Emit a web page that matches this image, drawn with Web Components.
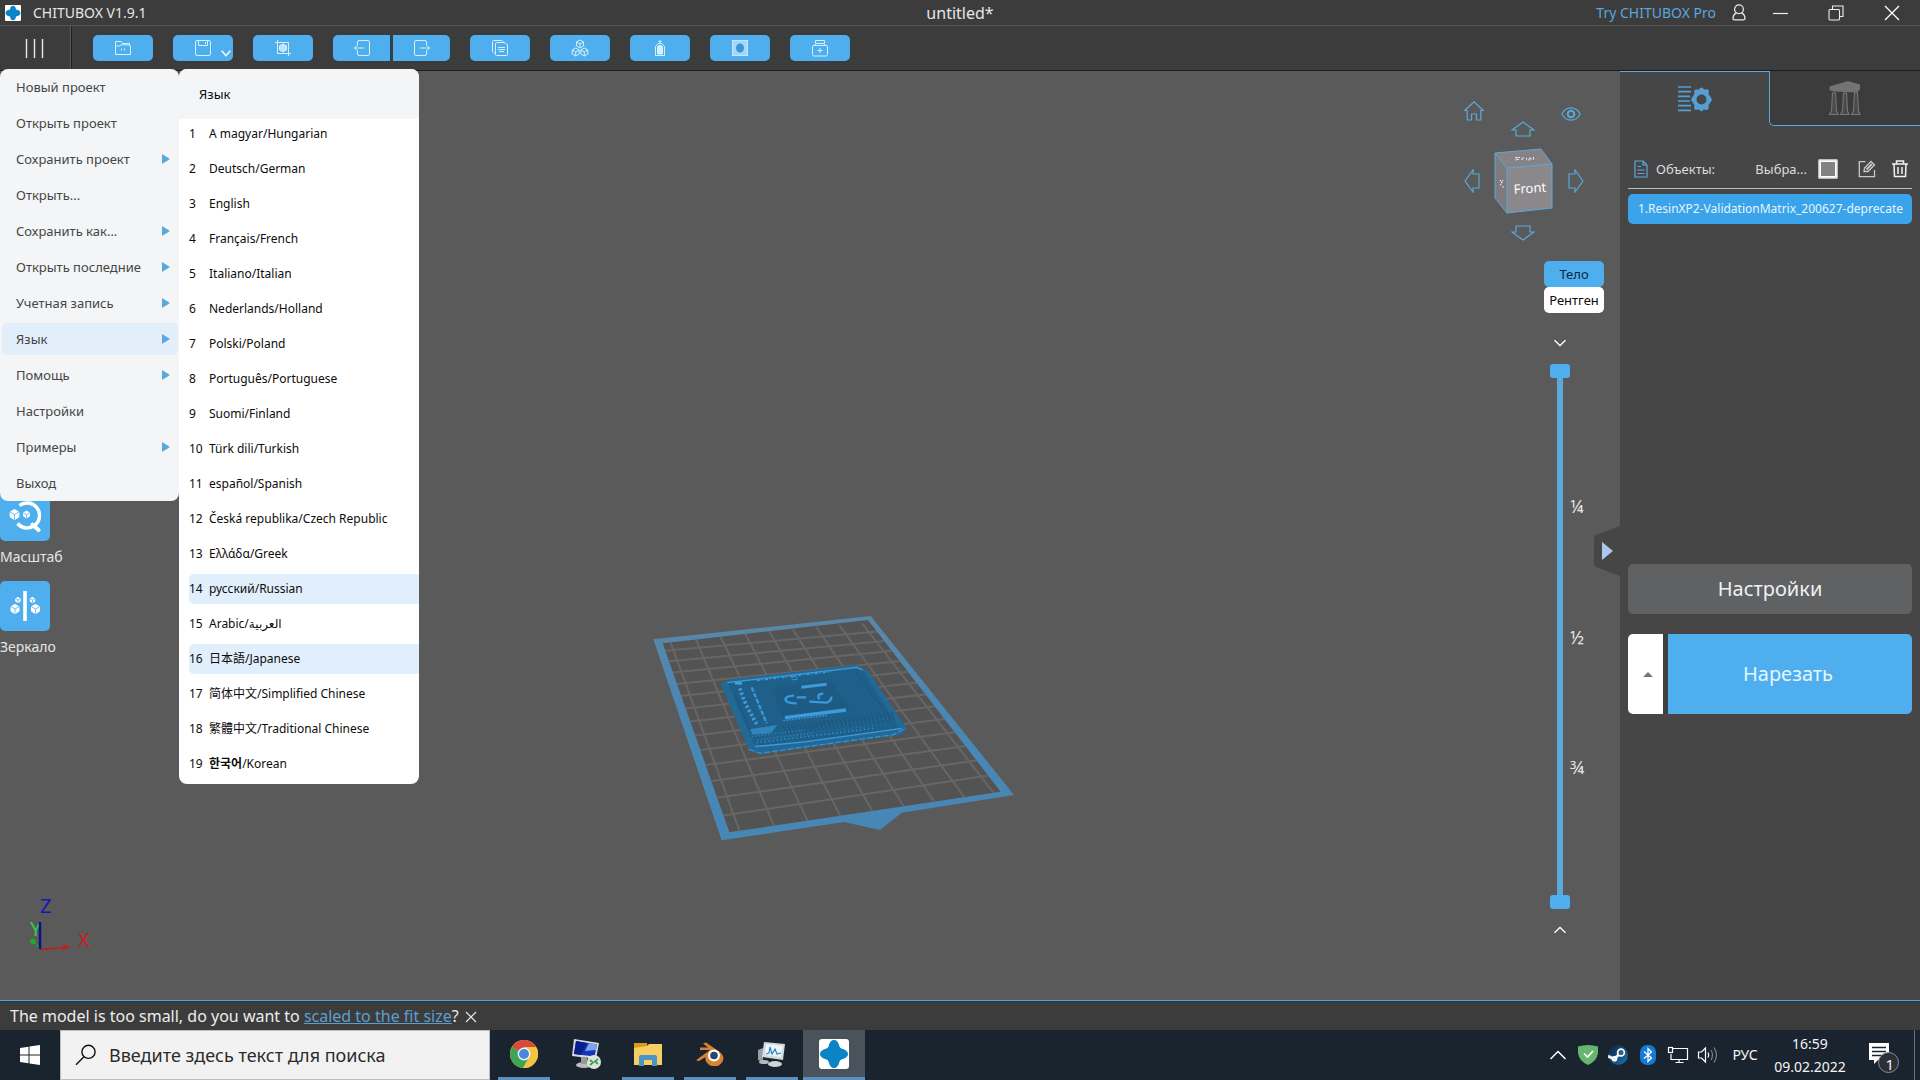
<!DOCTYPE html>
<html lang="ru">
<head>
<meta charset="utf-8">
<title>CHITUBOX</title>
<style>
:root{
  --ui:"Noto Sans","Open Sans","Noto Sans CJK SC","DejaVu Sans",sans-serif;
  --blue:#4faeed; --line:#5ba9dc; --bar:#3c3c3c; --panel:#464646; --canvas:#5a5a5a; --light:#f3f5f7;
}
html,body{margin:0;height:100%}
body{font-family:var(--ui);font-size:13px;line-height:20px;color:#e6e6e6;background:var(--canvas);overflow:hidden}
chitu-app{height:100vh}
</style>
</head>
<body>
<chitu-app></chitu-app>
<script>
const RESET = `*{box-sizing:border-box}
button{font:inherit;color:inherit;background:none;border:0;padding:0;margin:0;cursor:pointer}
svg{display:block}`;

function component(tag, css, html, setup){
  const tpl = document.createElement('template');
  tpl.innerHTML = `<style>${RESET}${css}</style>${html}`;
  customElements.define(tag, class extends HTMLElement{
    connectedCallback(){
      if(this.shadowRoot) return;
      const root = this.attachShadow({mode:'open'});
      root.append(tpl.content.cloneNode(true));
      if(setup) setup(this, root);
    }
  });
}

/* ---------- icons: name -> [width, height, markup] ---------- */
const cube = (x,y,r,f='none') => {
  const h=r*.5, w=r*.87;
  return `<path d="M${x} ${y-r}L${x+w} ${y-h}V${y+h}L${x} ${y+r}L${x-w} ${y+h}V${y-h}Z" fill="${f}"/><path d="M${x-w} ${y-h}L${x} ${y}L${x+w} ${y-h}M${x} ${y}V${y+r}"/>`;
};
const solid = (x,y,r) => {
  const h=r*.5, w=r*.87;
  return `<path d="M${x} ${y-r}L${x+w} ${y-h}V${y+h}L${x} ${y+r}L${x-w} ${y+h}V${y-h}Z" fill="#fff" stroke="#fff" stroke-linejoin="round"/><path d="M${x-w} ${y-h}L${x} ${y}L${x+w} ${y-h}M${x} ${y}V${y+r}" fill="none" stroke="#4faeed" stroke-width=".8"/>`;
};
const T = 'fill="none" stroke="#d4f1fd" stroke-width="1"';
const ICONS = {
  logo:[16,16,`<rect width="16" height="16" rx="1" fill="#fff"/><path d="M8 .8C9.6.8 10.7 2 11 4.6 14 5 15.4 6.4 15.4 8S14 11 11 11.4C10.7 14 9.600 15.200 8 15.200S5.300 14 5 11.400C2 11 .6 9.600.6 8S2 5 5 4.600C5.300 2 6.400.8 8 .8Z" fill="#0a84c6"/>`],
  bars:[20,20,`<path d="M2.500 1V20M10.500 1V20M18.500 1V20" stroke="#e8e8e8" stroke-width="1.400"/>`],
  open:[18,16,`<g ${T}><path d="M1.500 14.500V1.500H7L8.500 3.500H15.500V6"/><path d="M1.500 6H5.500L7 4.800H14L16.500 6V14.500H1.500Z"/><path d="M7.500 8.500V10.500M10.500 8.500V10.500"/></g>`],
  save:[18,18,`<g ${T}><rect x="1.500" y="1.500" width="15" height="15" rx="1.500"/><path d="M4.500 1.500V6.500H13.500V1.500M11.500 3V5"/></g>`],
  chevS:[10,7,`<path d="M.7.800L5 5.800L9.300.800" fill="none" stroke="#fff" stroke-width="1.400"/>`],
  crop:[18,18,`<g ${T}><path d="M3.500 1V14.500H17M1 3.500H14.500V17"/><path d="M9 5L12.500 6.800V11L9 13L5.500 11V6.800Z" fill="#bfe3f9"/></g>`],
  undo:[18,18,`<g ${T}><path d="M4.500 6V3Q4.500 1.500 6 1.500H15Q16.500 1.500 16.500 3V15Q16.500 16.500 15 16.500H6Q4.500 16.500 4.500 15V12"/><path d="M11.500 9H1.500M4.500 6L1.500 9L4.500 12"/></g>`],
  redo:[18,18,`<g ${T}><path d="M13.500 6V3Q13.500 1.500 12 1.500H3Q1.500 1.500 1.500 3V15Q1.500 16.500 3 16.500H12Q13.500 16.500 13.500 15V12"/><path d="M6.500 9H16.500M13.500 6L16.500 9L13.500 12"/></g>`],
  copy:[18,18,`<g ${T}><path d="M4 14.500L2.500 13.500Q1.500 13 1.500 12V2.500Q1.500 1.500 2.500 1.500H10.500Q11.500 1.500 12 2.500L12.500 3.500"/><path d="M5.500 3.500H14L16.500 6V15.500Q16.500 16.500 15.500 16.500H5.500Q4.500 16.500 4.500 15.500V4.500Q4.500 3.500 5.500 3.500Z"/><path d="M7 8.500H14M7 10.500H14M8 12.500H13"/></g>`],
  cubes:[18,18,`<g ${T}>${cube(9,5,4)}${cube(4.700,13,4)}${cube(13.300,13,4)}</g>`],
  bottle:[12,18,`<g ${T}><path d="M6 1V4M4.500 2.500H7.500"/><path d="M4 4.500H8L10.500 7.500V16.500H1.500V7.500Z"/><path d="M3.500 8V15H8.500V8L7.500 6.500H4.500Z" fill="#d4f1fd"/></g>`],
  hollow:[18,18,`<rect x="1.500" y="1.500" width="15" height="15" fill="#a5d6f6" stroke="#c5e7fb"/><ellipse cx="9" cy="9" rx="4" ry="4.500" fill="#3f95d4"/>`],
  kit:[18,18,`<g ${T}><rect x="1.500" y="6.500" width="15" height="10.500" rx="1.500"/><path d="M3.500 6.500L5 4.500H13L14.500 6.500M4.500 4.500V1.500H13.500V4.500M9 9V14M6.500 11.500H11.500"/></g>`],
  user:[14,17,`<g fill="none" stroke="#e8e8e8" stroke-width="1.300"><circle cx="7" cy="5.200" r="4.400"/><path d="M4.500 8.800Q1 10.500 1 14.500Q1 15.900 2.500 15.900H11.500Q13 15.900 13 14.500Q13 10.500 9.500 8.800"/></g>`],
  min:[16,16,`<path d="M1 8.500H16" stroke="#eee" stroke-width="1.200"/>`],
  restore:[16,16,`<g fill="none" stroke="#eee" stroke-width="1.100"><rect x="1" y="4.500" width="10.500" height="10.500" rx="1"/><path d="M4.500 4.500V1H15V11.500H11.500"/></g>`],
  close:[16,16,`<path d="M1 1L15 15M15 1L1 15" stroke="#fff" stroke-width="1.300"/>`],
  closeS:[12,12,`<path d="M1 1L11 11M11 1L1 11" stroke="#e6e6e6" stroke-width="1.200"/>`],
  scale:[32,32,`<path d="M10.500 5.500A12.500 12.500 0 1 1 8.500 23.500" fill="none" stroke="#fff" stroke-width="3.500"/><path d="M23.500 24.500L29.500 30" stroke="#fff" stroke-width="4" stroke-linecap="round"/>${solid(5.500,14.500,5)}${solid(17.500,14.500,3.400)}`],
  mirror:[32,32,`<path d="M16 1V31" stroke="#fff" stroke-width="3.600"/>${solid(9,10,2.600)}${solid(6,19,4.600)}${solid(23.500,10,2.600)}${solid(26.500,19,4.600)}`],
  home:[20,20,`<path d="M.7 9.500L10 .8L19.300 9.500H16.800V19H12.500V13H7.500V19H3.200V9.500Z" fill="none" stroke="var(--line)" stroke-width="1.200"/>`],
  eye:[20,14,`<g fill="none" stroke="var(--line)" stroke-width="1.200"><path d="M.8 7Q4 .8 10 .8T19.200 7Q16 13.200 10 13.200T.8 7Z"/><circle cx="10" cy="7" r="3.300" stroke-width="2"/></g>`],
  up:[24,16,`<path d="M12 1L23 9H19V15H5V9H1Z" fill="none" stroke="var(--line)" stroke-width="1.200"/>`],
  down:[24,16,`<path d="M12 15L23 7H19V1H5V7H1Z" fill="none" stroke="var(--line)" stroke-width="1.200"/>`],
  left:[16,24,`<path d="M1 12L9 1V5H15V19H9V23Z" fill="none" stroke="var(--line)" stroke-width="1.200"/>`],
  right:[16,24,`<path d="M15 12L7 1V5H1V19H7V23Z" fill="none" stroke="var(--line)" stroke-width="1.200"/>`],
  chevDown:[14,8,`<path d="M1.500 1.200L7 6.500L12.500 1.200" fill="none" stroke="#fff" stroke-width="1.300"/>`],
  chevUp:[14,8,`<path d="M1.500 6.800L7 1.500L12.500 6.800" fill="none" stroke="#fff" stroke-width="1.300"/>`],
  tri:[8,10,`<path d="M0 0L8 5L0 10Z" fill="var(--line)"/>`],
  triBig:[11,18,`<path d="M0 0L11 9L0 18Z" fill="#a9c8ea"/>`],
  triUp:[10,5,`<path d="M0 5L5 0L10 5Z" fill="#777"/>`],
  slices:[36,28,`<path d="M1 2H14M1 6.700H14M1 11.300H13M1 16H13M1 20.600H14M1 25.300H14" stroke="#549fd6" stroke-width="1.700"/><path fill-rule="evenodd" fill="#549fd6" d="M18.500 4.500L22 4.500Q24.500 .5 27 4.500L30.500 4.200Q32.500 5 31.500 9L34 12.500Q35.500 14.500 34 16.500L31.500 20Q32.500 24 30 25L26.500 24.500Q24.500 28 22 24.500L18.500 25Q16.500 24 17.500 20L15 16.500Q13.500 14.500 15 12.500L17.500 9Q16.500 5 18.500 4.500ZM24.500 9.500A5 5 0 1 0 24.500 19.500A5 5 0 1 0 24.500 9.500Z"/>`],
  supports:[34,36,`<path d="M1.500 6.500L20 1L32 4.500V9L29.500 12.500L5 11.500L1.500 10Z" fill="#737373"/><g fill="#4a4a4a" stroke="#777" stroke-width="1.100"><path d="M4.500 13H7.500L8.500 31L10 34.500H1.500L3.500 31Z"/><path d="M15.500 13H18.500L19.500 31L21 34.500H12.500L14.500 31Z"/><path d="M26.500 13H29.500L30.500 31L32 34.500H23.500L25.500 31Z"/></g>`],
  doc:[14,18,`<g fill="none" stroke="var(--line)" stroke-width="1.200"><path d="M1 1H9L13 5V17H1ZM9 1V5H13M3.500 6.500H7M3.500 10H10.500M3.500 13.500H10.500"/></g>`],
  edit:[18,18,`<g fill="none" stroke="#c8c8c8" stroke-width="1.300"><path d="M7.500 1.700H1.300V16.700H16.500V10"/><path d="M6 11.500L6.500 8L13 1.500L16.500 5L10 11.500Z" /><path d="M8.500 9.500L14 4" stroke-width="2"/></g>`],
  trash:[18,18,`<g fill="none" stroke="#f2f2f2" stroke-width="1.500"><path d="M1 4H17M5.500 4V1H12.500V4M3 4L3.500 16.500H14.500L15 4M7 7V14M11 7V14"/></g>`],
  win:[20,20,`<path d="M0 3L8.500 1.700V9.500H0ZM9.500 1.500L20 0V9.500H9.500ZM0 10.500H8.500V18.300L0 17ZM9.500 10.500H20V20L9.500 18.500Z" fill="#fff"/>`],
  search:[22,22,`<circle cx="13.500" cy="7.800" r="6.600" fill="none" stroke="#111" stroke-width="1.400"/><path d="M9 12.800L1 20.800" stroke="#111" stroke-width="1.500"/>`],
  chrome:[28,28,`<circle cx="14" cy="14" r="14" fill="#f3c444"/><path d="M14 14L1.900 7A14 14 0 0 1 26.100 7Z" fill="#d9493f"/><path d="M14 14L1.900 7A14 14 0 0 0 13 28L19 17Z" fill="#3da355"/><path d="M14 7H26.100A14 14 0 0 1 13 28L20 17Z" fill="#f3c444"/><circle cx="14" cy="14" r="6.400" fill="#f4f6fa"/><circle cx="14" cy="14" r="5" fill="#4a86e0"/>`],
  remote:[30,30,`<path d="M3 0L28 4L25 20L1 17Z" fill="#d5dadd"/><path d="M5 2L26 5.500L23.500 17.500L3 15Z" fill="#1536b8"/><path d="M5 2L16 4L10 16L3 15Z" fill="#0a1f8c"/><path d="M18 4L26 5.500L25 11L14 12Z" fill="#7da2ee"/><ellipse cx="13" cy="26" rx="8" ry="3" fill="#b9bdc0"/><path d="M10 18H16V25H10Z" fill="#999"/><circle cx="23" cy="23" r="7" fill="#dfe4e2"/><path d="M19 21L22 23.500L19 26M27 20L24 22.500L27 25" stroke="#3da24a" stroke-width="1.800" fill="none"/>`],
  folder:[28,24,`<path d="M0 1H11L14 3H0Z" fill="#d79a1b"/><rect y="1" width="13" height="6" fill="#d99b18"/><path d="M0 6L13 4L15 2H28V23H0Z" fill="#f5cf63"/><path d="M5 24V15Q5 13 7 13H21Q23 13 23 15V24H18V18H10V24Z" fill="#4c93c8"/>`],
  blender:[28,24,`<path d="M1 17.500L14 8H4V5.500H12L7 1.500L10 .5L23 9.500A9 8 0 1 1 9.500 15L3 19Q0 19.500 1 17.500Z" fill="#d98234"/><circle cx="18" cy="13.500" r="6" fill="#fff"/><circle cx="18" cy="13.500" r="3.800" fill="#24466f"/>`],
  monitor:[28,26,`<path d="M0 9L5 7V21L0 19Z" fill="#999fa3"/><path d="M6 1L27 3L25 19L4 16Z" fill="#d3d9dc"/><path d="M8 3L25 5L23 16L7 14Z" fill="#edf6fb"/><path d="M8 13L11 12L12 6L14 13L17 8L19 13L23 12" fill="none" stroke="#2784b8" stroke-width="1.200"/><ellipse cx="17" cy="23" rx="7" ry="3" fill="#d0d4d7"/><ellipse cx="6" cy="21" rx="5" ry="2" fill="#b6babd"/>`],
  chitu:[30,30,`<rect width="30" height="30" rx="3" fill="#fff"/><path d="M15 1C18 1 19.500 3.500 20.500 7.500Q21 9 22.500 9.500C26.500 10.500 29 12.500 29 15S26.500 19.500 22.500 20.500Q21 21 20.500 22.500C19.500 26.500 18 29 15 29S10.500 26.500 9.500 22.500Q9 21 7.500 20.500C3.500 19.500 1 17.500 1 15S3.500 10.500 7.500 9.500Q9 9 9.500 7.500C10.500 3.500 12 1 15 1Z" fill="#0a84c6"/>`],
  trayUp:[18,10,`<path d="M1.500 9L9 1.500L16.500 9" fill="none" stroke="#fff" stroke-width="1.500"/>`],
  shield:[20,20,`<path d="M0 1.500Q10 -1.500 20 1.500V8Q19 16 10 20Q1 16 0 8Z" fill="#67b56f"/><path d="M6 8.500L9.500 12L15 6" stroke="#fff" stroke-width="1.700" fill="none"/>`],
  steam:[20,20,`<defs><linearGradient id="g" x2="1" y2="1"><stop stop-color="#10213b"/><stop offset="1" stop-color="#1a75b4"/></linearGradient></defs><circle cx="10" cy="10" r="10" fill="url(#g)"/><path d="M0 11L6 14L11.500 9" stroke="#e8eef4" stroke-width="3" fill="none"/><circle cx="13" cy="7.500" r="3.400" fill="#3a5878" stroke="#fff" stroke-width="1.700"/><circle cx="6.500" cy="13.800" r="2.200" fill="#e8eef4" stroke="#fff" stroke-width="1.200"/>`],
  bt:[16,20,`<rect width="16" height="20" rx="7" fill="#1479d7"/><path d="M4 6.500L11.500 13L8 16.500V3.500L11.500 7L4 13.500" stroke="#fff" stroke-width="1.300" fill="none"/>`],
  net:[22,18,`<g fill="none" stroke="#fff" stroke-width="1.200"><path d="M6 2.500H20.500V13.500H4V8M12 13.500V16.500M8.500 16.500H16.500"/><rect x="1.500" y="1.500" width="4" height="5"/></g>`],
  sound:[22,20,`<path d="M1.500 7H4.500L8.500 3V17L4.500 13H1.500Z" fill="none" stroke="#fff" stroke-width="1.200"/><path d="M11 7.500Q12.500 10 11 12.500" fill="none" stroke="#fff" stroke-width="1.200"/><path d="M14 5Q17 10 14 15M17 2.500Q22 10 17 17.500" fill="none" stroke="#7b8289" stroke-width="1.200"/>`],
  note:[32,32,`<path d="M1 1H21V18H10L6 22V18H1Z" fill="#fff"/><path d="M4 5.500H18M4 9.500H18M4 13.500H14" stroke="#1a242f" stroke-width="1.300"/><circle cx="20.500" cy="20.500" r="10" fill="#2c2f33" stroke="#8c9095"/>`]
};
component('ui-icon', `:host{display:inline-block;flex:none}`, ``, (el, root) => {
  const [w,h,m] = ICONS[el.getAttribute('name')];
  root.innerHTML += `<svg width="${w}" height="${h}" viewBox="0 0 ${w} ${h}" aria-hidden="true">${m}</svg>`;
});

/* ---------- title bar ---------- */
component('title-bar', `
:host{display:grid;grid-template-columns:1fr auto 1fr;align-items:center;height:26px;background:var(--bar);border-bottom:1px solid #555}
.app{display:flex;align-items:center;gap:12px;padding-left:5px;font-size:14px}
.doc{font-size:16px}
.right{display:flex;justify-content:flex-end;align-items:center}
a{color:#5aa6de;text-decoration:none;font-size:14px;margin-right:10px}
button{width:56px;height:25px;display:grid;place-items:center}
.user{width:26px}`,
`<div class="app"><ui-icon name="logo"></ui-icon><span>CHITUBOX V1.9.1</span></div>
<span class="doc">untitled*</span>
<div class="right"><a href="#pro">Try CHITUBOX Pro</a>
<button class="user" aria-label="user"><ui-icon name="user"></ui-icon></button>
<button aria-label="minimize"><ui-icon name="min"></ui-icon></button>
<button aria-label="restore"><ui-icon name="restore"></ui-icon></button>
<button aria-label="close"><ui-icon name="close"></ui-icon></button></div>`);

/* ---------- toolbar ---------- */
component('tool-button', `
:host{display:block;width:60px}
:host([half]){width:57px}
button{width:100%;height:26px;border-radius:5px;background:var(--blue);display:grid;place-items:center;position:relative}
:host([half=l]) button{border-radius:5px 0 0 5px}
:host([half=r]) button{border-radius:0 5px 5px 0}
::slotted(*){position:absolute;right:2px;bottom:4px;line-height:0}`,
`<button><slot></slot></button>`, (el, root) => {
  const name = el.getAttribute('icon'), b = root.querySelector('button');
  b.setAttribute('aria-label', name);
  b.insertAdjacentHTML('afterbegin', `<ui-icon name="${name}"></ui-icon>`);
});
component('tool-bar', `
:host{display:flex;height:45px;background:var(--bar);border-bottom:1px solid #1d1d1d}
.menu{width:72px;display:grid;place-items:center;padding-right:4px;border-right:1px solid #1f1f1f;box-shadow:inset -1px 0 #5a5a5a}
.tools{display:flex;align-items:center;gap:20px;padding-left:21px;padding-bottom:1px}
.pair{display:flex;gap:3px}`,
`<button class="menu" aria-label="menu"><ui-icon name="bars"></ui-icon></button>
<div class="tools"><tool-button icon="open"></tool-button>
<tool-button icon="save"><ui-icon name="chevS"></ui-icon></tool-button>
<tool-button icon="crop"></tool-button>
<div class="pair"><tool-button half="l" icon="undo"></tool-button><tool-button half="r" icon="redo"></tool-button></div>
<tool-button icon="copy"></tool-button><tool-button icon="cubes"></tool-button><tool-button icon="bottle"></tool-button>
<tool-button icon="hollow"></tool-button><tool-button icon="kit"></tool-button></div>`);

/* ---------- main menu ---------- */
component('menu-row', `
:host{display:block;padding:2px 1px 2px 2px}
button{width:100%;height:32px;display:flex;justify-content:space-between;align-items:center;padding:0 8px 0 14px;border-radius:5px;color:#454545}
:host([active]) button{background:#e3eefb}
ui-icon{display:none;line-height:0}
:host([sub]) ui-icon{display:block}`,
`<button role="menuitem"><slot></slot><ui-icon name="tri"></ui-icon></button>`);
component('main-menu', `
:host{display:block;width:179px;background:var(--light);border-radius:8px}`,
`<menu-row>Новый проект</menu-row><menu-row>Открыть проект</menu-row><menu-row sub>Сохранить проект</menu-row>
<menu-row>Открыть...</menu-row><menu-row sub>Сохранить как...</menu-row><menu-row sub>Открыть последние</menu-row>
<menu-row sub>Учетная запись</menu-row><menu-row sub active>Язык</menu-row><menu-row sub>Помощь</menu-row>
<menu-row>Настройки</menu-row><menu-row sub>Примеры</menu-row><menu-row>Выход</menu-row>`);

const LANGS = ['A magyar/Hungarian','Deutsch/German','English','Français/French','Italiano/Italian','Nederlands/Holland','Polski/Poland','Português/Portuguese','Suomi/Finland','Türk dili/Turkish','español/Spanish','Česká republika/Czech Republic','Ελλάδα/Greek','русский/Russian','Arabic/العربية','日本語/Japanese','简体中文/Simplified Chinese','繁體中文/Traditional Chinese','<b>한국어</b>/Korean'];
component('language-menu', `
:host{display:block;width:240px;background:#fff;border-radius:8px;overflow:hidden;color:#0c0c0c;font-size:12px}
h2{margin:0;height:50px;padding:0 20px;display:flex;align-items:center;background:var(--light);font-size:13px;font-weight:400}
button{width:230px;height:30px;margin:0 0 5px 10px;display:grid;grid-template-columns:20px 1fr;align-items:center;text-align:left;border-radius:5px 0 0 5px;white-space:nowrap}
.on{background:#e1effc}`,
`<h2>Язык</h2><div class="list"></div>`, (el, root) => {
  root.querySelector('.list').innerHTML = LANGS.map((t,i) =>
    `<button role="menuitem" class="${i===13||i===15?'on':''}"><span>${i+1}</span><span>${t}</span></button>`).join('');
});

/* ---------- left tools ---------- */
component('rail-tool', `
:host{display:flex;flex-direction:column;align-items:flex-start;gap:6px;height:90px;font-size:14px;color:#e6e6e6}
button{width:50px;height:50px;border-radius:5px;background:var(--blue);display:grid;place-items:center}
label{white-space:nowrap}`,
`<button id="b"></button><label for="b"><slot></slot></label>`, (el, root) => {
  root.querySelector('button').innerHTML = `<ui-icon name="${el.getAttribute('icon')}"></ui-icon>`;
});

/* ---------- 3D scene ---------- */
function grid(){
  // perspective mapping of the 8 x 12 cell build plate
  const [p0,p1,p2,p3] = [[100,150],[687,97],[1023,530],[280,642]];
  const dx1=p1[0]-p2[0], dx2=p3[0]-p2[0], sx=p0[0]-p1[0]+p2[0]-p3[0];
  const dy1=p1[1]-p2[1], dy2=p3[1]-p2[1], sy=p0[1]-p1[1]+p2[1]-p3[1];
  const d=dx1*dy2-dx2*dy1, g=(sx*dy2-dx2*sy)/d, h=(dx1*sy-sx*dy1)/d;
  const a=p1[0]-p0[0]+g*p1[0], b=p3[0]-p0[0]+h*p3[0], e=p1[1]-p0[1]+g*p1[1], f=p3[1]-p0[1]+h*p3[1];
  const pt=(u,v)=>{u/=8;v/=12;const w=g*u+h*v+1;return ((a*u+b*v+p0[0])/w).toFixed(1)+' '+((e*u+f*v+p0[1])/w).toFixed(1)};
  let s='';
  for(let i=0;i<=8;i++) s+=`M${pt(i,-1)}L${pt(i,13)}`;
  for(let j=0;j<=12;j++) s+=`M${pt(-.5,j)}L${pt(8.5,j)}`;
  return s;
}
component('build-scene', `:host{display:block}svg{width:100%;height:100%}`,
`<svg viewBox="0 71 1620 929" role="img" aria-label="model">
<clipPath id="in"><path d="M68 130L684 60L1082 575L268 697Z"/></clipPath>
<linearGradient id="edge" x1="0" y1="0" x2="0" y2="1"><stop offset="0" stop-color="#5b87a8"/><stop offset=".4" stop-color="#4a87b3"/><stop offset="1" stop-color="#4787b5"/></linearGradient>
<g transform="translate(640 600) scale(.33333)">
<path d="M68 130L684 60L1082 575L268 697Z" fill="#535353"/>
<path class="grid" clip-path="url(#in)" fill="none" stroke="#666" stroke-width="6"/>
<path fill-rule="evenodd" fill="url(#edge)" d="M40 118L692 48L1122 585L785 638L720 690L612 666L245 721ZM68 130L268 697L1082 575L684 60Z"/>
<path d="M242 252L270 238L648 195L682 210L800 384L788 402L760 408L362 462L326 448Z" fill="#236997"/>
<path d="M262 250L650 206L672 216L775 380L760 390L368 438L340 428Z" fill="#1f608b"/>
<path d="M395 265L570 240L632 330L430 358Z" fill="#1d5b84"/>
<path d="M262 248L650 202L668 210M345 440L500 425L785 385" fill="none" stroke="#3c9bdb" stroke-width="4"/>
<path d="M326 448L362 460L500 440L760 404L798 385" fill="none" stroke="#3391d0" stroke-width="4" stroke-dasharray="18 6"/>
<path d="M350 428L700 385" stroke="#2f8dcc" stroke-width="5" stroke-dasharray="4 8"/>
<path d="M375 414L740 372M430 400L750 355" stroke="#2b7db4" stroke-width="3" stroke-dasharray="3 9"/>
<path d="M430 362L560 346" stroke="#348fce" stroke-width="5" stroke-dasharray="5 4"/>
<path d="M435 353L618 330" stroke="#3e9cdc" stroke-width="10"/>
<path d="M484 262L560 253" stroke="#3e9cdc" stroke-width="9"/>
<path d="M470 310Q438 310 436 298Q438 288 462 287M470 292H498M508 305L560 308Q575 303 574 290M538 298Q528 282 550 281" fill="none" stroke="#389adb" stroke-width="7"/>
<path d="M285 250H306" stroke="#459fdb" stroke-width="8"/>
<path d="M300 265Q310 305 350 372" fill="none" stroke="#429cda" stroke-width="11" stroke-dasharray="7 7"/>
<path d="M335 262L380 370" stroke="#3b98d8" stroke-width="7" stroke-dasharray="14 5"/>
<path d="M350 241L575 214" stroke="#3c97d3" stroke-width="6" stroke-dasharray="9 5 3 8"/>
<path d="M640 208L725 320M285 285L330 390" stroke="#174868" stroke-width="3" stroke-dasharray="4 5"/>
<path d="M455 235Q460 225 472 232M455 240L473 237" stroke="#3b98d8" stroke-width="3" fill="none"/>
<path d="M330 388L412 375L392 400L338 404Z" fill="#3185bd"/>
<path class="ribs" stroke="#1a5378" stroke-width="3"/>
<path d="M336 410L490 390M352 420L520 400" stroke="#328bc7" stroke-width="4" stroke-dasharray="3 7"/>
</g></svg>`, (el, root) => {
  root.querySelector('.grid').setAttribute('d', grid());
  let s=''; for(let i=0;i<28;i++){const x=430+i*12, y=378-i*1.6; s+=`M${x} ${y}l${14-i*.2} 24`;}
  root.querySelector('.ribs').setAttribute('d', s);
});
component('axis-gizmo', `:host{display:block;width:100px;height:80px}text{font-size:20px}`,
`<svg width="100" height="80" viewBox="20 885 100 80">
<path d="M40 949.500L64 947.500" stroke="#c41a1a" stroke-width="1.300"/><path d="M63 944.500L71 947L63 950Z" fill="#d01a1a"/>
<path d="M34 941L40 949" stroke="#1c9a2c" stroke-width="1.500"/><circle cx="33" cy="941.500" r="2.800" fill="#20a830"/>
<text x="30" y="936" fill="#2fd04a">Y</text>
<path d="M40 949V922" stroke="#10108c" stroke-width="2.500"/>
<text x="40" y="913" fill="#1616b4">Z</text><text x="78" y="947" fill="#cc1e1e">X</text></svg>`);

component('view-cube', `
:host{display:block;width:120px;height:142px;position:relative}
svg,button{position:absolute;line-height:0}
text{font-size:13px;fill:#fff}`,
`<svg width="120" height="142" viewBox="24 20 120 142">
<path d="M55 73L67 88L67 133L55 118Z" fill="#7d7b7d"/><path d="M55 73L101 69L112 84L67 88Z" fill="#858385"/><path d="M67 88L112 84V128L67 133Z" fill="#8b888b"/>
<path d="M55 118V73L67 88V133L112 128V84L101 69L55 73M67 88L112 84M67 133L55 118" fill="none" stroke="#5ba9dc"/>
<path d="M76 77V80.500M76 77.500H80M77 79.500H79M82 80V78H84M86.500 78V80.500M89 80.500V78H91V80M93.500 77V80" stroke="#fff" stroke-width="1" fill="none" stroke-dasharray="1.500 .800"/>
<path d="M60 100L62 103M63 100L60 106M63 106V108" stroke="#fff" stroke-dasharray="1.500 .700"/>
<text x="74" y="114" transform="rotate(-4 74 114)">Front</text></svg>
<button style="left:0;top:1px" aria-label="home"><ui-icon name="home"></ui-icon></button>
<button style="left:97px;top:7px" aria-label="eye"><ui-icon name="eye"></ui-icon></button>
<button style="left:47px;top:21px" aria-label="up"><ui-icon name="up"></ui-icon></button>
<button style="left:0;top:69px" aria-label="left"><ui-icon name="left"></ui-icon></button>
<button style="left:104px;top:69px" aria-label="right"><ui-icon name="right"></ui-icon></button>
<button style="left:47px;top:125px" aria-label="down"><ui-icon name="down"></ui-icon></button>`);

component('render-switch', `
:host{display:flex;flex-direction:column;width:60px;color:#0c0c0c;font-size:13px}
button{height:26px;border-radius:5px;background:#fff}
.on{background:var(--blue);color:#0a2740}`,
`<button class="on">Тело</button><button>Рентген</button>`);

component('layer-slider', `
:host{display:grid;grid-template-columns:20px auto;grid-template-rows:14px 1fr 14px;row-gap:14px;column-gap:0;justify-items:center}
.step{display:grid;place-items:center}
.track{grid-row:2;display:grid;width:20px;background:linear-gradient(var(--line),var(--line)) center/6px 100% no-repeat}
input{grid-area:1/1;writing-mode:vertical-lr;direction:rtl;appearance:none;background:none;width:20px;height:100%;margin:0;pointer-events:none}
input::-webkit-slider-thumb{appearance:none;pointer-events:auto;width:20px;height:14px;border-radius:3px;background:var(--blue)}
.marks{grid-row:2;grid-column:2;display:flex;flex-direction:column;justify-content:space-between;padding:130px 0;font-size:18px;line-height:24px}
.last{grid-row:3}`,
`<button class="step" aria-label="down"><ui-icon name="chevDown"></ui-icon></button>
<div class="track"><input type="range" min="0" max="100" value="100" aria-label="top"><input type="range" min="0" max="100" value="0" aria-label="bottom"></div>
<div class="marks"><span>¼</span><span>½</span><span>¾</span></div>
<button class="step last" aria-label="up"><ui-icon name="chevUp"></ui-icon></button>`);

/* ---------- right panel ---------- */
component('side-panel', `
:host{display:flex;flex-direction:column;width:300px;background:var(--panel);position:relative}
.tabs{display:flex;height:55px}
.tabs button{display:grid;place-items:center}
.tabs .on{width:149px;border-top:1px solid var(--line)}
.tabs .off{flex:1;background:var(--bar);border-left:1px solid var(--line);border-bottom:1px solid var(--line);border-bottom-left-radius:5px}
.body{flex:1;display:flex;flex-direction:column;padding:24px 8px 0}
.head{display:flex;align-items:center;height:39px;padding:0 3px 0 6px;border-bottom:1px solid #bdbdbd;font-size:13px;color:#dcdcdc}
.head h3{margin:0 auto 0 8px;font-size:13px;font-weight:400}
.head label{margin-right:11px}
input{appearance:none;width:20px;height:20px;margin:0 20px 0 0;border:2px solid #e8e8e8;outline:1px solid #bbb;outline-offset:-1px;box-shadow:inset 0 0 0 1px #fff;border-radius:2px;background:#828282}
.head button{display:grid;place-items:center}
.edit{margin-right:15px}
.item{margin-top:5px;height:30px;border-radius:5px;background:#3aa3ea;color:#e4f5ff;text-align:left;padding-left:10px;overflow:hidden;white-space:nowrap;font-size:12px}
.set{margin-top:auto;height:50px;border-radius:5px;background:#606163;font-size:20px;color:#f0f0f0}
.slice{display:flex;height:80px;margin:20px 0 286px;border-radius:5px;overflow:hidden;background:#3d3f41;gap:5px}
.slice .opt{width:35px;padding-left:4px;background:#fff;display:grid;place-items:center}
.slice .go{flex:1;padding-right:4px;background:var(--blue);font-size:20px;color:#e2f6ff}
.fold{position:absolute;left:-26px;top:455px;width:26px;height:50px;background:var(--panel);clip-path:polygon(0 11px,2px 9px,100% 0,100% 100%,2px 41px,0 39px);display:grid;place-items:center}`,
`<div class="tabs"><button class="on" aria-label="slice settings"><ui-icon name="slices"></ui-icon></button><button class="off" aria-label="supports"><ui-icon name="supports"></ui-icon></button></div>
<div class="body"><div class="head"><ui-icon name="doc"></ui-icon><h3>Объекты:</h3><label for="all">Выбра...</label><input type="checkbox" id="all"><button class="edit" aria-label="edit"><ui-icon name="edit"></ui-icon></button><button aria-label="delete"><ui-icon name="trash"></ui-icon></button></div>
<button class="item">1.ResinXP2-ValidationMatrix_200627-deprecate</button>
<button class="set">Настройки</button>
<div class="slice"><button class="opt" aria-label="options"><ui-icon name="triUp"></ui-icon></button><button class="go">Нарезать</button></div></div>
<button class="fold" aria-label="fold"><ui-icon name="triBig"></ui-icon></button>`);

/* ---------- hint ---------- */
component('hint-bar', `
:host{display:flex;align-items:center;height:30px;padding-left:10px;background:var(--bar);border-top:1px solid #5f9ec6;box-shadow:inset 0 1px #1d3a50;font-size:16px;color:#ececec}
p{margin:0}a{color:#5c9fcd}
button{margin-left:6px;padding-top:2px;line-height:0}`,
`<p>The model is too small, do you want to <a href="#fit">scaled to the fit size</a>?</p><button aria-label="close"><ui-icon name="closeS"></ui-icon></button>`);

/* ---------- taskbar ---------- */
component('task-app', `
:host{display:block;width:62px;padding:0 5px}
:host([active]){padding:0}
button{width:100%;height:50px;display:grid;place-items:center;border-bottom:3px solid transparent}
:host([running]) button{border-color:#5a8fc2}
:host([active]) button{background:#4a535c;border-color:#5a8fc2}`,
`<button><slot></slot></button>`);
component('task-bar', `
:host{display:flex;height:50px;background:#1a242f;color:#f4f4f4;font-size:14px}
.start{width:60px;display:grid;place-items:center}
.search{width:430px;display:flex;align-items:center;gap:12px;padding-left:14px;background:#f2f2f2;border:1px solid #bcbcbc}
input{flex:1;min-width:0;border:0;padding:0;background:none;outline:0;font:18px var(--ui);color:#222}
input::placeholder{color:#2b2b2b;opacity:1}
.apps{display:flex;padding-left:3px}
.tray{margin-left:auto;display:flex;align-items:center}
.tray button{width:30px;height:50px;display:grid;place-items:center}
.tray .lang{width:49px;padding-right:5px;font-size:14px}
.clock{width:76px;text-align:center;line-height:23px;font-size:14px}
.tray .note{width:66px;position:relative;padding:6px 0 0 6px}
.note b{position:absolute;right:20px;bottom:7px;font-weight:400;font-size:15px;line-height:18px}
.peek{width:6px;height:50px;border-left:1px solid #6a7178}`,
`<button class="start" aria-label="start"><ui-icon name="win"></ui-icon></button>
<div class="search"><ui-icon name="search"></ui-icon><input type="text" aria-label="search" placeholder="Введите здесь текст для поиска"></div>
<div class="apps"><task-app running><ui-icon name="chrome"></ui-icon></task-app><task-app><ui-icon name="remote"></ui-icon></task-app><task-app running><ui-icon name="folder"></ui-icon></task-app><task-app running><ui-icon name="blender"></ui-icon></task-app><task-app running><ui-icon name="monitor"></ui-icon></task-app><task-app active><ui-icon name="chitu"></ui-icon></task-app></div>
<div class="tray"><button aria-label="tray"><ui-icon name="trayUp"></ui-icon></button><button aria-label="shield"><ui-icon name="shield"></ui-icon></button><button aria-label="steam"><ui-icon name="steam"></ui-icon></button><button aria-label="bluetooth"><ui-icon name="bt"></ui-icon></button><button aria-label="network"><ui-icon name="net"></ui-icon></button><button aria-label="sound"><ui-icon name="sound"></ui-icon></button>
<button class="lang">РУС</button><div class="clock">16:59<br>09.02.2022</div><button class="note" aria-label="notifications"><ui-icon name="note"></ui-icon><b>1</b></button><div class="peek"></div></div>`);

/* ---------- app shell ---------- */
component('chitu-app', `
:host{display:flex;flex-direction:column;position:relative}
main{flex:1;display:flex;min-height:0}
.view{flex:1;position:relative;min-width:0;background:var(--canvas)}
build-scene{position:absolute;inset:0}
.rail{position:relative;width:max-content;padding-top:420px}
axis-gizmo{position:absolute;left:20px;bottom:35px}
view-cube{position:absolute;right:36px;top:29px}
render-switch{position:absolute;right:16px;top:190px}
layer-slider{position:absolute;right:36px;top:265px;bottom:63px}
.menus{position:absolute;left:0;top:69px;display:flex;align-items:flex-start}`,
`<title-bar></title-bar><tool-bar></tool-bar>
<main><div class="view"><build-scene></build-scene>
<div class="rail"><rail-tool icon="scale">Масштаб</rail-tool><rail-tool icon="mirror">Зеркало</rail-tool></div>
<axis-gizmo></axis-gizmo><view-cube></view-cube><render-switch></render-switch><layer-slider></layer-slider></div>
<side-panel></side-panel></main>
<hint-bar></hint-bar><task-bar></task-bar>
<div class="menus"><main-menu></main-menu><language-menu></language-menu></div>`);
</script>
</body>
</html>
